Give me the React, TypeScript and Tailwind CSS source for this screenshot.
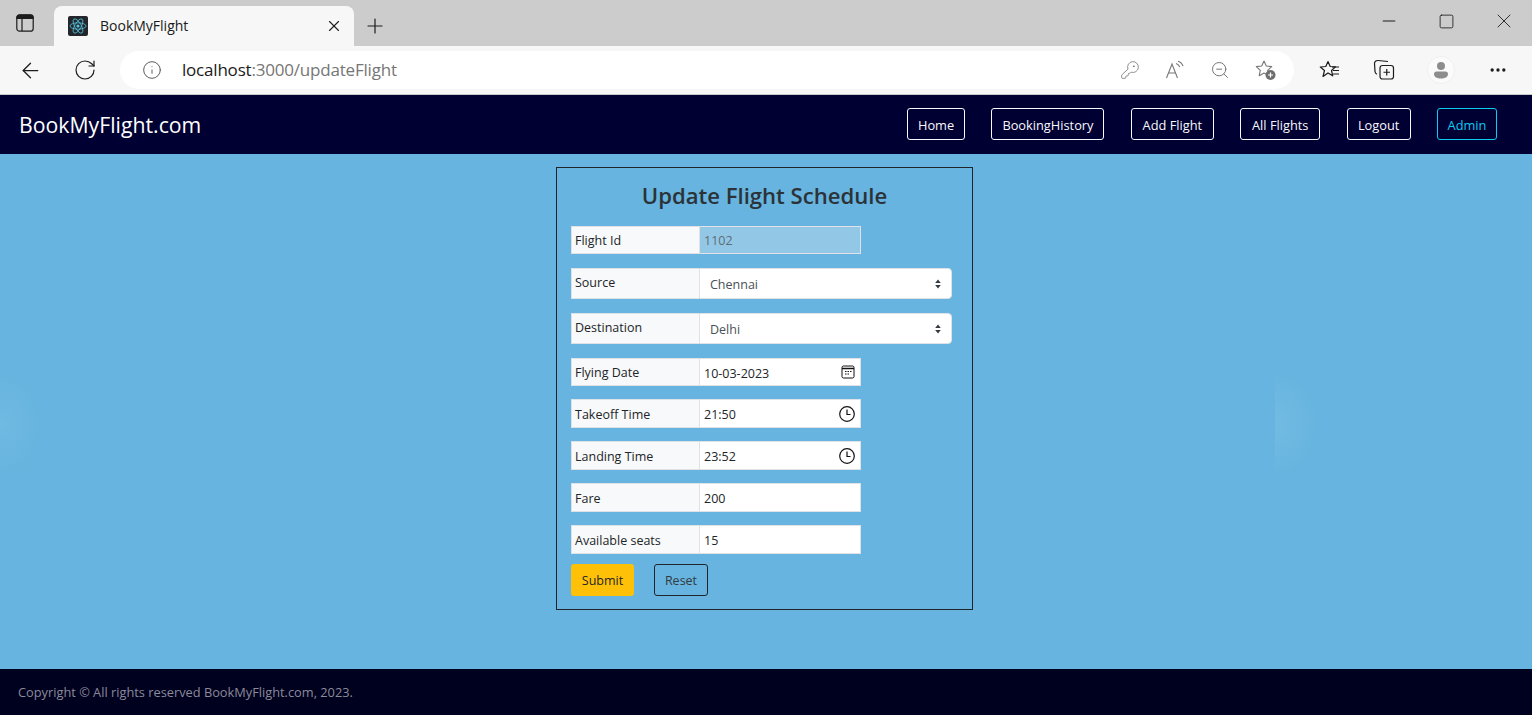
import { Info, X, Plus, ArrowLeft, RotateCw, Minus, Square, MoreHorizontal, KeyRound, ZoomOut } from 'lucide-react'

const font = "font-['Open_Sans','Noto_Sans',sans-serif]"

const navLinks = [
  { label: 'Home', width: 'w-[58px]' },
  { label: 'BookingHistory', width: 'w-[113px]' },
  { label: 'Add Flight', width: 'w-[83px]' },
  { label: 'All Flights', width: 'w-[80px]' },
  { label: 'Logout', width: 'w-[64px]' },
]

function ReactLogo() {
  return (
    <svg viewBox="0 0 20 20" className="w-5 h-5 rounded-[2px] bg-[#23272b]">
      <g fill="none" stroke="#53c1de" strokeWidth="0.8">
        <ellipse cx="10" cy="10" rx="8" ry="3.2" />
        <ellipse cx="10" cy="10" rx="8" ry="3.2" transform="rotate(60 10 10)" />
        <ellipse cx="10" cy="10" rx="8" ry="3.2" transform="rotate(120 10 10)" />
      </g>
      <circle cx="10" cy="10" r="1.6" fill="#53c1de" />
    </svg>
  )
}

function SidebarIcon() {
  return (
    <svg viewBox="0 0 18 18" className="w-[18px] h-[18px]" fill="none" stroke="#1c1c1c" strokeWidth="1.2">
      <rect x="0.800" y="0.800" width="16.400" height="16.400" rx="2.800" />
      <path d="M1 4.500V3.500C1 2 2 1 3.500 1h11C16 1 17 2 17 3.500v1z" fill="#1c1c1c" />
      <path d="M6 5v12" />
    </svg>
  )
}

function BrowserChrome() {
  return (
    <div className="font-['Open_Sans',sans-serif]">
      <div className="h-[46px] bg-[#cccccc] flex items-end relative">
        <div className="w-[54px] h-[46px] pr-[4px] flex items-center justify-center shrink-0">
          <SidebarIcon />
        </div>
        <div className="w-[300px] h-[40px] bg-[#f7f7f7] rounded-t-lg flex items-center pl-[14px] pr-[11px] pb-[1px] shrink-0">
          <ReactLogo />
          <span className="ml-[12px] text-[14px] text-[#1a1a1a] flex-1 pb-[1px]">BookMyFlight</span>
          <X size={18} strokeWidth={1.5} className="text-[#1c1c1c]" />
        </div>
        <div className="w-[42px] h-[40px] flex items-center justify-center shrink-0">
          <Plus size={24} strokeWidth={1.2} className="text-[#1c1c1c]" />
        </div>
        <div className="absolute top-[9px] right-[16px] flex items-center text-[#1c1c1c]">
          <Minus size={20} strokeWidth={1.2} />
          <Square size={17} strokeWidth={1.2} className="ml-[39px]" />
          <X size={24} strokeWidth={0.9} className="ml-[37px]" />
        </div>
      </div>
      <div className="h-[49px] bg-[#f7f7f7] border-b border-[#c8c8c8] flex items-center">
        <div className="w-[60px] flex justify-center">
          <ArrowLeft size={25} strokeWidth={1.2} className="text-[#1c1c1c]" />
        </div>
        <div className="w-[50px] flex justify-center">
          <RotateCw size={24} strokeWidth={1.2} className="text-[#1c1c1c]" />
        </div>
        <div className="ml-[10px] w-[1174px] h-[38px] bg-white rounded-full flex items-center pl-[22px] pr-[17px]">
          <Info size={20} strokeWidth={1.2} className="text-[#5c5c5c]" />
          <span className="ml-[20px] text-[17px] tracking-[-0.2px] text-[#1a1a1a]">
            localhost<span className="text-[#767676]">:3000/updateFlight</span>
          </span>
          <div className="ml-auto flex items-center gap-[25px] text-[#777777]">
            <KeyRound size={20} strokeWidth={1} />
            <ReadAloudIcon />
            <ZoomOut size={20} strokeWidth={1.2} />
            <FavAddIcon />
          </div>
        </div>
        <div className="ml-[25px] flex items-center text-[#1c1c1c]">
          <FavListIcon />
          <div className="ml-[32px]"><CollectionsIcon /></div>
          <div className="ml-[32px] w-7 h-7 rounded-full bg-[#fbfbfb] border border-[#f0f0f0] flex items-center justify-center">
            <ProfileIcon />
          </div>
          <MoreHorizontal size={20} strokeWidth={2} className="ml-[33px]" />
        </div>
      </div>
    </div>
  )
}

function ReadAloudIcon() {
  return (
    <svg viewBox="0 0 20 20" className="w-5 h-5" fill="none" stroke="currentColor" strokeWidth="1.1">
      <path d="M1.5 18 7 4l5.5 14M3.5 13h7" />
      <path d="M11 3.5c2 .6 3.2 1.8 3.8 3.6M13 1.2c2.6.8 4.3 2.5 5 5" />
    </svg>
  )
}

function FavAddIcon() {
  return (
    <svg viewBox="0 0 22 22" className="w-[22px] h-[22px]">
      <path d="M9 2l2.3 5 5.4.6-4 3.7 1.1 5.4L9 14l-4.8 2.7 1.1-5.4-4-3.7 5.4-.6z" fill="none" stroke="currentColor" strokeWidth="1.1" strokeLinejoin="round" />
      <circle cx="15.5" cy="16" r="5" fill="#6d6d6d" />
      <path d="M15.5 13.5v5M13 16h5" stroke="#fff" strokeWidth="1.2" />
    </svg>
  )
}

function FavListIcon() {
  return (
    <svg viewBox="0 0 22 22" className="w-[22px] h-[22px]" fill="none" stroke="currentColor" strokeWidth="1.2" strokeLinejoin="round">
      <path d="M9 2.5l2.2 5 5.3.4-4 3.6 1.2 5.3L9 13.900l-5 3.600 1.500-6L1.300 8l5.500-.5z" />
      <path d="M13 8h7M14 11.500h6M14 15h6" />
    </svg>
  )
}

function CollectionsIcon() {
  return (
    <svg viewBox="0 0 22 22" className="w-[22px] h-[22px]" fill="none" stroke="currentColor" strokeWidth="1.2">
      <path d="M15 2.500 5 1.500C3 1.400 1.500 2.700 1.500 4.500l.5 8c.2 1.300.8 2.200 2 2.800" />
      <rect x="7" y="6.500" width="13.500" height="13.500" rx="2.500" />
      <path d="M13.750 10v6.500M10.500 13.250H17" />
    </svg>
  )
}

function ProfileIcon() {
  return (
    <svg viewBox="0 0 16 18" className="w-4 h-[18px]" fill="#8d8d8d">
      <circle cx="8" cy="5" r="4" />
      <path d="M1 13c0-1.500 1-2.500 2.500-2.500h9C14 10.500 15 11.500 15 13c0 3-3 4.500-7 4.500S1 16 1 13z" />
    </svg>
  )
}

function CalendarIcon() {
  return (
    <svg viewBox="0 0 14 14" className="w-[14px] h-[14px]" fill="none" stroke="#111" strokeWidth="1">
      <rect x="1" y="1" width="12" height="12" rx="1.500" />
      <path d="M1 3.500h12" strokeWidth="1.500" />
      <path d="M4 6.500h1.500M6.500 6.500H8M9 6.500h1.500M4 9h1.500M6.500 9H8" strokeWidth="1.200" />
    </svg>
  )
}

function ClockIcon() {
  return (
    <svg viewBox="0 0 16 16" className="w-4 h-4" fill="none" stroke="#111" strokeWidth="1.2">
      <circle cx="8" cy="8" r="7.300" />
      <path d="M8 3.500V8.500H11.500" />
    </svg>
  )
}

function SelectArrows() {
  return (
    <svg viewBox="0 0 8 12" className="w-2 h-3" fill="#343a40">
      <path d="M4 1.500 6.800 5H1.200zM4 10.500 1.200 7h5.600z" />
    </svg>
  )
}

function Field({ label, value, icon, className }: { label: string; value: string; icon?: React.ReactNode; className: string }) {
  return (
    <div className={`flex h-[29px] w-[290px] ${className}`}>
      <label className="w-[128px] shrink-0 bg-[#f8f9fa] border border-[#dee2e6] border-r-0 pl-[3px] pt-[3px] flex items-center text-[12.500px] text-[#212529]">
        {label}
      </label>
      <div className="relative flex-1">
        <input
          readOnly
          value={value}
          className="w-full h-full bg-white border border-[#dee2e6] pl-[4px] pt-[2px] text-[12.500px] text-[#212529] outline-none"
        />
        {icon && <span className="absolute right-[6px] top-1/2 -translate-y-1/2 flex">{icon}</span>}
      </div>
    </div>
  )
}

function SelectField({ label, value, className }: { label: string; value: string; className: string }) {
  return (
    <div className={`flex h-[31px] w-[381px] ${className}`}>
      <label className="w-[128px] shrink-0 bg-[#f8f9fa] border border-[#dee2e6] border-r-0 pl-[3px] pb-[1px] flex items-center text-[12.500px] text-[#212529]">
        {label}
      </label>
      <div className="relative flex-1">
        <select
          value={value}
          onChange={() => {}}
          className="appearance-none w-full h-full bg-white border border-[#dee2e6] rounded-r-[4px] pl-[10px] pt-[4px] text-[12.500px] text-[#495057] outline-none"
        >
          <option>{value}</option>
        </select>
        <span className="absolute right-[10px] top-1/2 -translate-y-1/2 flex"><SelectArrows /></span>
      </div>
    </div>
  )
}

export default function App() {
  return (
    <div className={`${font} h-[717px] bg-white flex flex-col overflow-hidden`}>
      <BrowserChrome />

      <nav className="h-[59px] bg-[#000033] flex items-center pl-[19px] pr-[35px] shrink-0">
        <a className="text-[21.250px] text-white">BookMyFlight.com</a>
        <div className="ml-auto flex items-center gap-[26.400px] pb-[1px]">
          {navLinks.map(link => (
            <a key={link.label} className={`${link.width} h-[32px] pt-[3px] flex items-center justify-center border border-[#f8f9fa] rounded-[3px] text-[12.800px] text-[#f8f9fa]`}>
              {link.label}
            </a>
          ))}
          <a className="w-[60px] h-[32px] pt-[3px] flex items-center justify-center border border-[#0dcaf0] rounded-[3px] text-[12.800px] text-[#0dcaf0]">
            Admin
          </a>
        </div>
      </nav>

      <main className="relative h-[515px] bg-[#66b4df] pt-[13px] shrink-0">
        <div className="absolute left-[-40px] top-[215px] w-[84px] h-[110px] bg-[radial-gradient(closest-side,#6fb9e2,#66b4df)]" />
        <div className="absolute left-[1275px] top-[215px] w-[45px] h-[110px] bg-[radial-gradient(ellipse_100%_50%_at_0%_50%,#72bbe3,#66b4df)]" />

        <div className="relative ml-[556px] w-[417px] h-[443px] border border-[#212529] px-[14px] pt-[11px]">
          <h1 className="text-[22.100px] leading-[32px] font-semibold text-[#2b3338] text-center">Update Flight Schedule</h1>

          <div className="flex h-[28px] w-[290px] mt-[15px]">
            <label className="w-[128px] shrink-0 bg-[#f8f9fa] border border-[#dee2e6] border-r-0 pl-[3px] pt-[2px] flex items-center text-[12.500px] text-[#212529]">
              Flight Id
            </label>
            <input
              disabled
              value="1102"
              className="flex-1 min-w-0 bg-[#92c8e6] border border-[#dee2e6] pl-[4px] pt-[2px] text-[12.500px] text-[#5f6c76] outline-none"
            />
          </div>

          <SelectField label="Source" value="Chennai" className="mt-[14px]" />
          <SelectField label="Destination" value="Delhi" className="mt-[14px]" />

          <Field label="Flying Date" value="10-03-2023" icon={<CalendarIcon />} className="mt-[14px] !h-[28px]" />
          <Field label="Takeoff Time" value="21:50" icon={<ClockIcon />} className="mt-[13px]" />
          <Field label="Landing Time" value="23:52" icon={<ClockIcon />} className="mt-[13px]" />
          <Field label="Fare" value="200" className="mt-[13px]" />
          <Field label="Available seats" value="15" className="mt-[13px]" />

          <div className="flex gap-[20px] mt-[10px]">
            <button className="h-[32px] w-[63px] pt-[2px] bg-[#ffc107] rounded-[3px] text-[12.500px] text-[#212529]">Submit</button>
            <button className="h-[32px] w-[54px] pt-[2px] border border-[#212529] rounded-[3px] text-[12.500px] text-[#343a40]">Reset</button>
          </div>
        </div>
      </main>

      <footer className="h-[46px] bg-[#00001f] flex items-center pl-[18px] pt-[2px] shrink-0">
        <p className="text-[12.800px] text-[#8b8b9a]">Copyright © All rights reserved BookMyFlight.com, 2023.</p>
      </footer>
    </div>
  )
}
